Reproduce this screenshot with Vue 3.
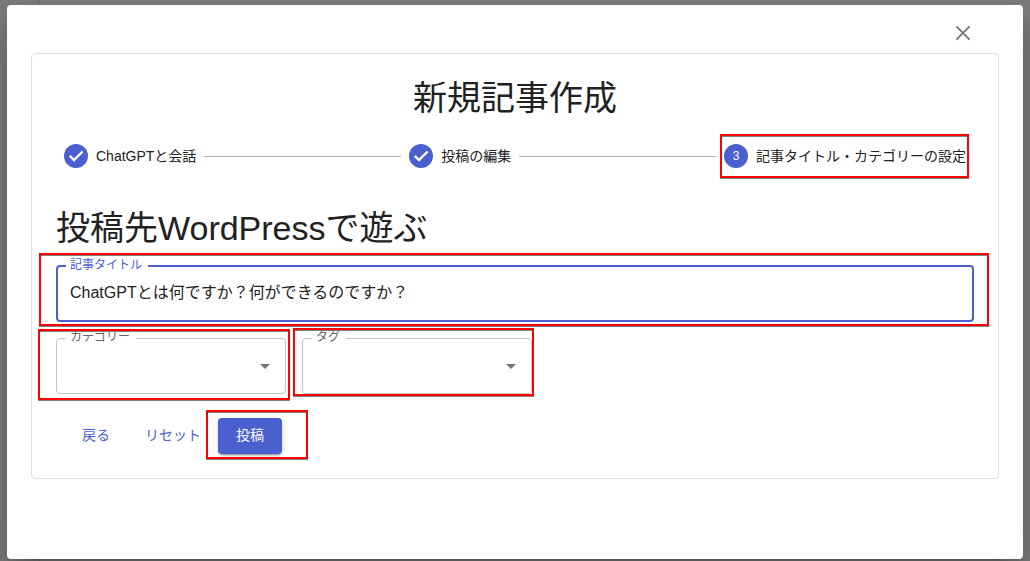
<script setup>
import { ref } from 'vue'

const title = ref('ChatGPTとは何ですか？何ができるのですか？')
const category = ref('')
const tag = ref('')
const steps = [
  { label: 'ChatGPTと会話', done: true },
  { label: '投稿の編集', done: true },
  { label: '記事タイトル・カテゴリーの設定', done: false },
]
</script>

<template>
  <div class="backdrop">
    <main class="dialog" role="dialog" aria-modal="true" aria-labelledby="dialog-title">
      <header class="dialog-bar">
        <button class="close" type="button" aria-label="閉じる">
          <svg viewBox="0 0 24 24" width="24" height="24" aria-hidden="true">
            <path d="M5.4 5.4L18.6 18.6M18.6 5.4L5.4 18.6" fill="none" stroke="currentColor" stroke-width="1.8" />
          </svg>
        </button>
      </header>

      <form class="card" @submit.prevent>
        <h1 id="dialog-title" class="heading center">新規記事作成</h1>

        <ol class="stepper">
          <li v-for="(step, i) in steps" :key="step.label" class="step" :class="{ linked: i > 0 }">
            <span v-if="i > 0" class="connector"></span>
            <div class="step-body" :class="{ marked: !step.done, 'mark-step': !step.done }">
              <svg class="step-icon" viewBox="0 0 24 24" width="24" height="24" aria-hidden="true">
                <circle cx="12" cy="12" r="12" />
                <path v-if="step.done" class="check" d="M5.8 11.9L10 16.1L18.6 7.5" />
                <text v-else x="12" y="16" text-anchor="middle">{{ i + 1 }}</text>
              </svg>
              <span>{{ step.label }}</span>
            </div>
          </li>
        </ol>

        <h2 class="heading site">投稿先WordPressで遊ぶ</h2>

        <div class="field focused marked mark-title">
          <label for="post-title">記事タイトル</label>
          <input id="post-title" v-model="title" type="text" />
        </div>

        <div class="selects">
          <div class="field marked mark-category">
            <label for="category">カテゴリー</label>
            <select id="category" v-model="category"><option value=""></option></select>
            <svg class="arrow" viewBox="0 0 10 5" width="10" height="5" aria-hidden="true"><path d="M0 0h10L5 5z" /></svg>
          </div>
          <div class="field marked mark-tag">
            <label for="tag">タグ</label>
            <select id="tag" v-model="tag"><option value=""></option></select>
            <svg class="arrow" viewBox="0 0 10 5" width="10" height="5" aria-hidden="true"><path d="M0 0h10L5 5z" /></svg>
          </div>
        </div>

        <div class="actions">
          <button class="btn" type="button">戻る</button>
          <button class="btn" type="reset">リセット</button>
          <div class="marked mark-submit">
            <button class="btn primary" type="submit">投稿</button>
          </div>
        </div>
      </form>
    </main>
  </div>
</template>

<style>
body {
  margin: 0;
}
</style>

<style scoped>
.backdrop {
  box-sizing: border-box;
  display: flex;
  min-height: 100vh;
  padding: 5px 7px 2px;
  overflow: hidden;
  background: linear-gradient(90deg, #7f7f7f 39px, #727272 39px, #727272 40px, #7f7f7f 40px);
  color: #212121;
  font-family: "Liberation Sans", "Noto Sans CJK JP", sans-serif;
}

.dialog {
  box-sizing: border-box;
  flex: 1;
  min-width: 0;
  padding: 8px 24px 24px;
  border-radius: 4px;
  background: #fff;
  box-shadow:
    0 11px 15px -7px rgba(0, 0, 0, 0.2),
    0 24px 38px 3px rgba(0, 0, 0, 0.14),
    0 9px 46px 8px rgba(0, 0, 0, 0.12);
}

.dialog-bar {
  display: flex;
  justify-content: flex-end;
  padding-right: 16px;
}

button {
  border: 0;
  background: none;
  font-family: inherit;
  cursor: pointer;
}

.close {
  display: flex;
  padding: 8px;
  color: #757575;
}

.card {
  padding: 23px 24px 24px;
  border: 1px solid #e0e0e0;
  border-radius: 4px;
}

.heading {
  margin: 0;
  font-size: 34px;
  font-weight: 400;
  line-height: 42px;
}

.center {
  text-align: center;
}

.site {
  margin: 39px 0 16px;
}

.stepper {
  display: flex;
  gap: 8px;
  margin: 25px 0 0;
  padding: 0 8px;
  list-style: none;
}

.step {
  display: flex;
  flex: none;
  align-items: center;
  gap: 8px;
}

.step.linked {
  flex: 1 1 auto;
}

.connector {
  flex: 1;
  min-width: 16px;
  height: 1px;
  background: #b0b0b0;
}

.step-body {
  display: flex;
  align-items: center;
  gap: 8px;
  font-size: 14px;
  line-height: 24px;
  white-space: nowrap;
}

.step-icon {
  flex: none;
  fill: #4a60cf;
}

.step-icon text {
  fill: #fff;
  font-size: 12px;
}

.check {
  fill: none;
  stroke: #fff;
  stroke-width: 2.4;
}

.field {
  display: flex;
  align-items: center;
  box-sizing: border-box;
  height: 56px;
  border: 1px solid #c4c4c4;
  border-radius: 4px;
}

.field label {
  position: absolute;
  top: -11px;
  left: 9px;
  padding: 0 6px 0 4px;
  background: #fff;
  color: #666;
  font-size: 12px;
  line-height: 18px;
}

.field.focused {
  height: 57px;
  border: 2px solid #4a60cf;
}

.field.focused label {
  left: 8px;
  color: #4a60cf;
}

input,
select {
  box-sizing: border-box;
  width: 100%;
  height: 100%;
  margin: 0;
  padding: 0 12px 5px;
  border: 0;
  outline: 0;
  appearance: none;
  background: none;
  color: inherit;
  font-family: inherit;
  font-size: 16px;
}

.arrow {
  position: absolute;
  right: 15px;
  fill: #757575;
  pointer-events: none;
}

.selects {
  display: grid;
  grid-template-columns: repeat(auto-fit, 230px);
  gap: 16px;
  margin-top: 16px;
}

.actions {
  display: flex;
  gap: 9px;
  margin-top: 24px;
  padding-left: 8px;
}

.btn {
  min-width: 64px;
  padding: 5px 8px 7px;
  border-radius: 4px;
  color: #4a60cf;
  font-size: 14px;
  line-height: 24px;
}

.primary {
  background: #4a60cf;
  color: #fff;
  box-shadow:
    0 3px 1px -2px rgba(0, 0, 0, 0.2),
    0 2px 2px rgba(0, 0, 0, 0.14),
    0 1px 5px rgba(0, 0, 0, 0.12);
}

/* Red call-out frames around the parts being explained */
.marked {
  position: relative;
}

.marked::after {
  content: "";
  position: absolute;
  z-index: 1;
  border: 2px solid #f00;
  box-shadow: 0 1px 0 #808080, inset 0 1px 0 #808080;
  pointer-events: none;
}

.mark-step::after {
  inset: -10px -3px -10px -4px;
}

.mark-title::after {
  inset: -14px -17px -6px -19px;
}

.mark-category::after {
  inset: -10px -5px -7px -19px;
}

.mark-tag::after {
  inset: -11px -3px -3px -10px;
}

.mark-submit::after {
  inset: -8px -26px -5px -12px;
}
</style>
